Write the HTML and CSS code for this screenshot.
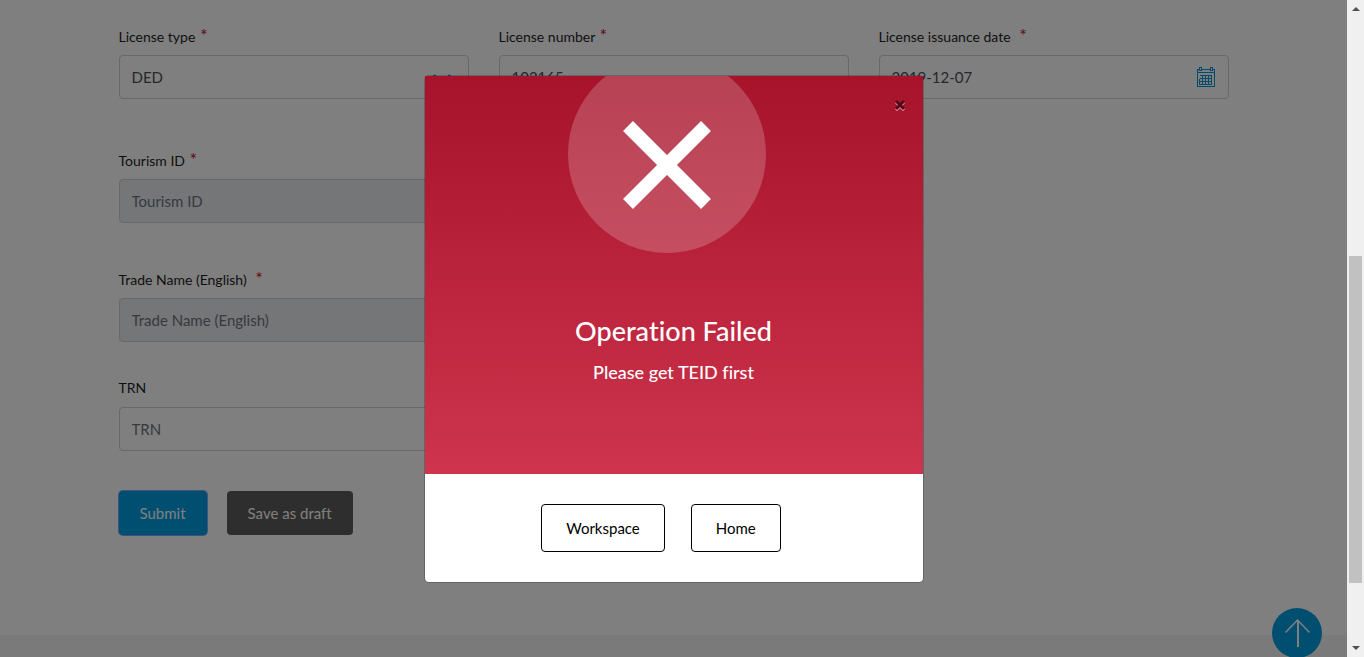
FILE: index.html
```html
<!DOCTYPE html>
<html lang="en">
<head>
<meta charset="utf-8">
<meta name="viewport" content="width=device-width, initial-scale=1">
<title>Operation Failed</title>
<link rel="stylesheet" href="styles.css">
</head>
<body>
<div class="page">
  <form class="form container">
    <div class="row">
      <div class="field">
        <label for="type">License type <span class="req">*</span></label>
        <div class="control">
          <select id="type"><option>DED</option></select>
          <svg class="chevron" viewBox="0 0 18 12" width="18" height="12"><path d="M1 1l8 8 8-8" fill="none" stroke="currentColor" stroke-width="2"/></svg>
        </div>
      </div>
      <div class="field">
        <label for="number">License number <span class="req">*</span></label>
        <div class="control"><input id="number" type="text" value="102165"></div>
      </div>
      <div class="field">
        <label for="date">License issuance date <span class="req wide">*</span></label>
        <div class="control">
          <input id="date" type="text" value="2019-12-07">
          <svg class="calendar" viewBox="0 0 20 22" width="20" height="22" fill="none" stroke="currentColor" shape-rendering="crispEdges">
            <path d="M3 3.500H1.500V20.500H18.500V3.500H17M6 3.500H14M1.500 6.500H18.500"/>
            <path d="M3.500 1.500H5.500V4.500H3.500ZM14.500 1.500H16.500V4.500H14.500Z"/>
            <path d="M6.500 9.500H15.500V18.500H6.500M3.500 12.500V18.500H6.500M3.500 12.500H15.500M3.500 15.500H15.500M4 9.500H6.500V18.500M9.500 9.500V18.500M12.500 9.500V18.500"/>
          </svg>
        </div>
      </div>
    </div>
    <div class="row row-tourism">
      <div class="field">
        <label for="tourism">Tourism ID <span class="req">*</span></label>
        <div class="control"><input id="tourism" type="text" placeholder="Tourism ID" disabled></div>
      </div>
    </div>
    <div class="row row-trade">
      <div class="field">
        <label for="trade">Trade Name (English) <span class="req wide">*</span></label>
        <div class="control"><input id="trade" type="text" placeholder="Trade Name (English)" disabled></div>
      </div>
    </div>
    <div class="row row-trn">
      <div class="field">
        <label for="trn">TRN</label>
        <div class="control"><input id="trn" type="text" placeholder="TRN"></div>
      </div>
    </div>
    <div class="actions">
      <button class="btn submit" type="button">Submit</button>
      <button class="btn draft" type="button">Save as draft</button>
    </div>
  </form>
  <footer class="footer"></footer>
  <button class="to-top" type="button" aria-label="Back to top">
    <svg viewBox="0 0 50 50" width="50" height="50" fill="none" stroke="currentColor"><path d="M13.500 24.500L25.500 12L37.500 24.500" stroke-width="1.500"/><path d="M26 12V39" stroke-width="2"/></svg>
  </button>
  <div class="overlay">
    <div class="modal" role="dialog" aria-modal="true" aria-labelledby="dialog-title">
      <div class="modal-head">
        <button class="close" type="button" aria-label="Close">
          <svg viewBox="0 0 12 12" width="12" height="12" fill="none"><path d="M2 3l8 8M10 3l-8 8" stroke="#f3a5b0" stroke-width="3"/><path d="M2 2l8 8M10 2l-8 8" stroke="#530a16" stroke-width="3"/></svg>
        </button>
        <svg class="failed" viewBox="0 0 198 177" width="198" height="177"><circle cx="99" cy="78" r="99" fill="#fff" fill-opacity=".2"/><path d="M60 50L138 128M138 50L60 128" stroke="#fff" stroke-width="14"/></svg>
        <h2 id="dialog-title">Operation Failed</h2>
        <p>Please get TEID first</p>
      </div>
      <div class="modal-foot">
        <button class="btn outline" type="button">Workspace</button>
        <button class="btn outline" type="button">Home</button>
      </div>
    </div>
  </div>
</div>
<div class="scrollbar" aria-hidden="true">
  <svg viewBox="0 0 17 17" width="17" height="17"><path d="M5 11h8l-4-4z" fill="#505050"/></svg>
  <div class="track"><div class="thumb"></div></div>
  <svg viewBox="0 0 17 17" width="17" height="17"><path d="M5 6h8l-4 4z" fill="#505050"/></svg>
</div>
</body>
</html>
```
FILE: styles.css
```css
* { box-sizing: border-box; }
body {
  margin: 0;
  height: 100vh;
  overflow: hidden;
  display: flex;
  background: #fff;
  color: #1e1e1e;
  font-family: Lato, "Open Sans", sans-serif;
  font-size: 14px;
  font-variant-ligatures: none;
}
button, input, select { font: inherit; }
.page {
  position: relative;
  flex: 1;
  min-width: 0;
  overflow: hidden;
  display: flex;
  flex-direction: column;
}
.container { width: 100%; max-width: 1140px; margin: 0 auto; padding: 26px 15px 0; }
.form { flex: none; padding-bottom: 100px; }
.row { display: grid; grid-template-columns: repeat(3, 1fr); gap: 30px; }
.row-tourism { margin-top: 51px; }
.row-trade { margin-top: 46px; }
.row-trn { margin-top: 36px; }
.field label { display: block; line-height: 20px; height: 20px; margin-bottom: 9px; }
.req { color: #c8102e; margin-left: 1px; font-size: 18px; line-height: 18px; }
.req.wide { margin-left: 5px; }
.control { display: grid; align-items: center; }
.control > * { grid-area: 1 / 1; }
.control input, .control select {
  width: 100%;
  height: 44px;
  padding: 0 12px;
  border: 1px solid #d0d0d0;
  border-radius: 4px;
  background: #fff;
  color: #495057;
  font-size: 15px;
  appearance: none;
}
.control input::placeholder { color: #6c757d; opacity: 1; }
.control input:disabled { background: #e9ecef; }
.chevron, .calendar { justify-self: end; color: #0095d9; pointer-events: none; }
.chevron { margin: 5px 18px 0 0; }
.calendar { margin-right: 13px; }
.actions { display: flex; gap: 20px; margin-top: 40px; }
.btn { height: 44px; padding: 0 21px; border: 0; border-radius: 4px; font-size: 15px; }
.submit { background: #009fe3; color: #fff; box-shadow: 0 0 0 1px #7aa7ff; }
.draft { background: #5c5c5c; color: #fff; }
.footer { flex: 1; background: #f4f4f4; }
.to-top {
  position: absolute;
  right: 25px;
  bottom: -1px;
  width: 50px;
  height: 50px;
  padding: 0;
  border: 0;
  border-radius: 50%;
  background: #009fe3;
  color: #fff;
}
.to-top svg { display: block; }
.overlay {
  position: absolute;
  inset: 0;
  display: flex;
  align-items: center;
  justify-content: center;
  background: rgba(0, 0, 0, .5);
}
.modal {
  width: 500px;
  border: 1px solid rgba(0, 0, 0, .2);
  border-radius: 5px;
  background: #fff;
  background-clip: padding-box;
}
.modal-head {
  position: relative;
  display: flex;
  flex-direction: column;
  align-items: center;
  padding-bottom: 90px;
  background: linear-gradient(#a6132a, #ce344d);
  color: #fff;
}
.failed { display: block; margin-right: 14px; }
.modal-head h2 { margin: 61px 0 0; font-size: 27px; line-height: 34px; font-weight: 500; }
.modal-head p { margin: 12px 0 0; font-size: 18px; line-height: 24px; font-weight: 500; }
.close {
  position: absolute;
  top: 23px;
  right: 17px;
  padding: 0;
  border: 0;
  background: none;
}
.close svg { display: block; }
.modal-foot {
  display: flex;
  justify-content: center;
  gap: 26px;
  padding: 30px 25px 30px 0;
}
.outline { height: 48px; padding: 0 24px; border: 1px solid #000; background: #fff; color: #000; }
.scrollbar { flex: none; width: 17px; display: flex; flex-direction: column; background: #f0f0f0; }
.scrollbar svg { display: block; }
.track { flex: 1; padding: 0 2px; display: grid; grid-template-rows: 239fr 327fr 57fr; }
.thumb { grid-row: 2; background: #c1c1c1; }
```
